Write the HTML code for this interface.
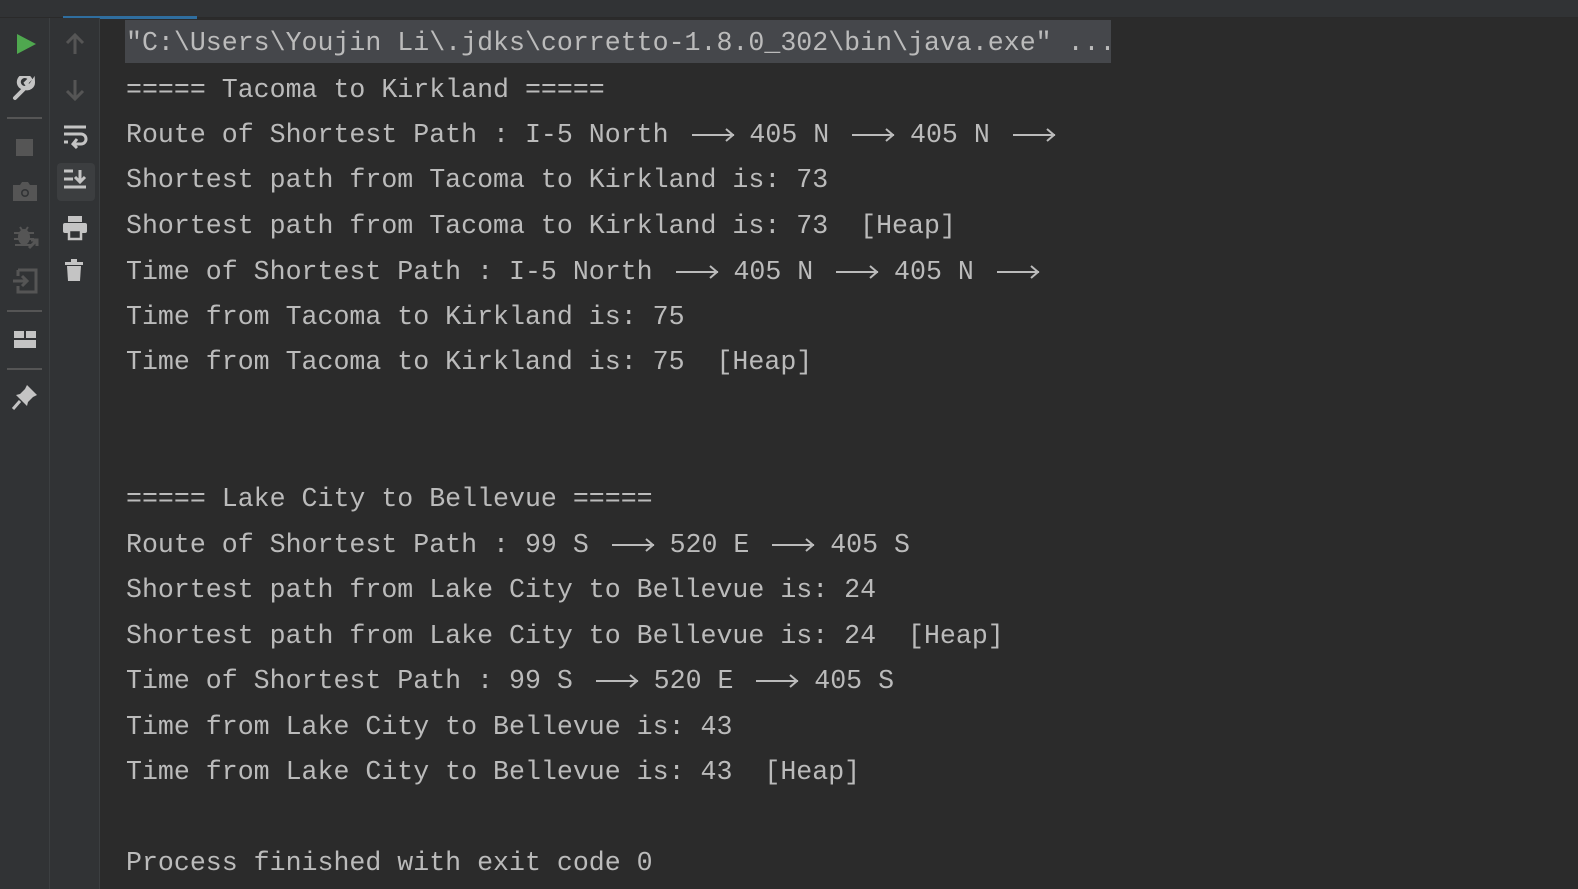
<!DOCTYPE html>
<html><head><meta charset="utf-8"><style>
html,body{margin:0;padding:0;width:1578px;height:889px;overflow:hidden;background:#2b2b2b}
.top{position:absolute;left:0;top:0;width:1578px;height:17px;background:#313335;border-bottom:1px solid #2a2a2a}
.tab{position:absolute;left:63px;top:16px;width:134px;height:3px;background:#2f6e9f}
.c1{position:absolute;left:0;top:18px;width:49px;height:871px;background:#313335;border-right:1px solid #3c3f41}
.c2{position:absolute;left:50px;top:18px;width:49px;height:871px;background:#313335;border-right:1px solid #3c3f41}
.sep{position:absolute;left:7px;width:35px;height:2px;background:#555}
svg.i{position:absolute}
.out{position:absolute;left:126px;top:20px;font-family:"Liberation Mono",monospace;font-size:26.6px;color:#bbbbbb;white-space:pre}
.l{position:absolute;left:0;height:45px;line-height:45px}
.hl{position:absolute;left:125px;top:20px;width:986px;height:43px;background:#45474b}
.a{display:inline-block;width:calc(3ch + 1px);height:20px;vertical-align:middle;position:relative}
.a svg{position:absolute;left:7px;top:2px}
</style></head><body>
<div class="top"></div><div class="tab"></div>
<div class="c1"></div><div class="c2"></div>
<div class="sep" style="top:117px"></div>
<div class="sep" style="top:310px"></div>
<div class="sep" style="top:368px"></div>
<div style="position:absolute;left:57px;top:163px;width:38px;height:38px;background:#3c3e40;border-radius:4px"></div>
<svg class="i" style="left:14px;top:32px" width="24" height="24"><path d="M3 2 L22 12 L3 22Z" fill="#4fa84f"/></svg>
<svg class="i" style="left:12px;top:76px" width="26" height="26"><path d="M3 22 L13 12 M13 12 a6 6 0 1 1 5 -9 l-4 4 l2 3 l3 -1 l2 -3 a6 6 0 0 1 -8 6" stroke="#c4c4c4" stroke-width="4" fill="none" stroke-linecap="round"/></svg>
<svg class="i" style="left:15px;top:138px" width="20" height="20"><rect x="1" y="1" width="17" height="17" fill="#555"/></svg>
<svg class="i" style="left:12px;top:180px" width="26" height="22"><path d="M1 5h7l2-3h6l2 3h7v16H1z" fill="#555"/><circle cx="13" cy="13" r="4" fill="#313335"/><circle cx="13" cy="13" r="2.4" fill="#555"/></svg>
<svg class="i" style="left:12px;top:224px" width="28" height="26"><ellipse cx="12" cy="13" rx="6" ry="8" fill="#555"/><path d="M2 9h20M2 15h20M3 21h18M8 3l2 3M16 3l-2 3" stroke="#555" stroke-width="2"/><path d="M17 24l8-8M19 16h6v6" stroke="#555" stroke-width="3" fill="none"/></svg>
<svg class="i" style="left:12px;top:268px" width="28" height="26"><path d="M6 2h18v22H6v-6M6 8V2" stroke="#555" stroke-width="3" fill="none"/><path d="M1 13h14M10 8l5 5-5 5" stroke="#555" stroke-width="3" fill="none"/></svg>
<svg class="i" style="left:13px;top:330px" width="24" height="20"><rect x="1" y="1" width="10" height="7" fill="#c4c4c4"/><rect x="13" y="1" width="10" height="7" fill="#c4c4c4"/><rect x="1" y="10" width="22" height="8" fill="#c4c4c4"/></svg>
<svg class="i" style="left:11px;top:383px" width="28" height="28"><path d="M16 2l10 10-4 2-5 5 -1 4-11-11 4-1 5-5z" fill="#c4c4c4"/><path d="M9 18l-7 8" stroke="#c4c4c4" stroke-width="3"/></svg>
<svg class="i" style="left:64px;top:32px" width="22" height="24"><path d="M11 22V3M3 11l8-8 8 8" stroke="#555" stroke-width="3" fill="none"/></svg>
<svg class="i" style="left:64px;top:78px" width="22" height="24"><path d="M11 2v19M3 13l8 8 8-8" stroke="#555" stroke-width="3" fill="none"/></svg>
<svg class="i" style="left:63px;top:124px" width="26" height="26"><path d="M1 3h22M1 10h17a5 5 0 0 1 0 10h-6" stroke="#c4c4c4" stroke-width="3" fill="none"/><path d="M14 15l-4 5 4 4" stroke="#c4c4c4" stroke-width="3" fill="none"/><path d="M1 18h4" stroke="#c4c4c4" stroke-width="3"/></svg>
<svg class="i" style="left:63px;top:168px" width="26" height="26"><path d="M1 3h9M1 11h9M1 19h22M17 2v12M12 9l5 5 5-5" stroke="#c4c4c4" stroke-width="3" fill="none"/></svg>
<svg class="i" style="left:62px;top:215px" width="26" height="26"><rect x="6" y="1" width="14" height="6" fill="#c4c4c4"/><rect x="1" y="8" width="24" height="10" rx="2" fill="#c4c4c4"/><rect x="7" y="15" width="12" height="9" fill="#313335" stroke="#c4c4c4" stroke-width="2.5"/></svg>
<svg class="i" style="left:65px;top:259px" width="20" height="24"><rect x="0" y="3" width="18" height="3" fill="#c4c4c4"/><rect x="6" y="0" width="6" height="3" fill="#c4c4c4"/><path d="M2 7h14l-1 15H3z" fill="#c4c4c4"/></svg>
<div class="hl"></div>
<div class="out">
<div class="l" style="top:1px">"C:\Users\Youjin Li\.jdks\corretto-1.8.0_302\bin\java.exe" ...</div>
<div class="l" style="top:48px">===== Tacoma to Kirkland =====</div>
<div class="l" style="top:93px">Route of Shortest Path : I-5 North <span class="a"><svg width="46" height="16"><path d="M0 8h42M34 2l7 6-7 6" stroke="#bbb" stroke-width="2" fill="none"/></svg></span> 405 N <span class="a"><svg width="46" height="16"><path d="M0 8h42M34 2l7 6-7 6" stroke="#bbb" stroke-width="2" fill="none"/></svg></span> 405 N <span class="a"><svg width="46" height="16"><path d="M0 8h42M34 2l7 6-7 6" stroke="#bbb" stroke-width="2" fill="none"/></svg></span></div>
<div class="l" style="top:138px">Shortest path from Tacoma to Kirkland is: 73</div>
<div class="l" style="top:184px">Shortest path from Tacoma to Kirkland is: 73  [Heap]</div>
<div class="l" style="top:230px">Time of Shortest Path : I-5 North <span class="a"><svg width="46" height="16"><path d="M0 8h42M34 2l7 6-7 6" stroke="#bbb" stroke-width="2" fill="none"/></svg></span> 405 N <span class="a"><svg width="46" height="16"><path d="M0 8h42M34 2l7 6-7 6" stroke="#bbb" stroke-width="2" fill="none"/></svg></span> 405 N <span class="a"><svg width="46" height="16"><path d="M0 8h42M34 2l7 6-7 6" stroke="#bbb" stroke-width="2" fill="none"/></svg></span></div>
<div class="l" style="top:275px">Time from Tacoma to Kirkland is: 75</div>
<div class="l" style="top:320px">Time from Tacoma to Kirkland is: 75  [Heap]</div>
<div class="l" style="top:457px">===== Lake City to Bellevue =====</div>
<div class="l" style="top:503px">Route of Shortest Path : 99 S <span class="a"><svg width="46" height="16"><path d="M0 8h42M34 2l7 6-7 6" stroke="#bbb" stroke-width="2" fill="none"/></svg></span> 520 E <span class="a"><svg width="46" height="16"><path d="M0 8h42M34 2l7 6-7 6" stroke="#bbb" stroke-width="2" fill="none"/></svg></span> 405 S</div>
<div class="l" style="top:548px">Shortest path from Lake City to Bellevue is: 24</div>
<div class="l" style="top:594px">Shortest path from Lake City to Bellevue is: 24  [Heap]</div>
<div class="l" style="top:639px">Time of Shortest Path : 99 S <span class="a"><svg width="46" height="16"><path d="M0 8h42M34 2l7 6-7 6" stroke="#bbb" stroke-width="2" fill="none"/></svg></span> 520 E <span class="a"><svg width="46" height="16"><path d="M0 8h42M34 2l7 6-7 6" stroke="#bbb" stroke-width="2" fill="none"/></svg></span> 405 S</div>
<div class="l" style="top:685px">Time from Lake City to Bellevue is: 43</div>
<div class="l" style="top:730px">Time from Lake City to Bellevue is: 43  [Heap]</div>
<div class="l" style="top:821px">Process finished with exit code 0</div>
</div>
</body></html>
